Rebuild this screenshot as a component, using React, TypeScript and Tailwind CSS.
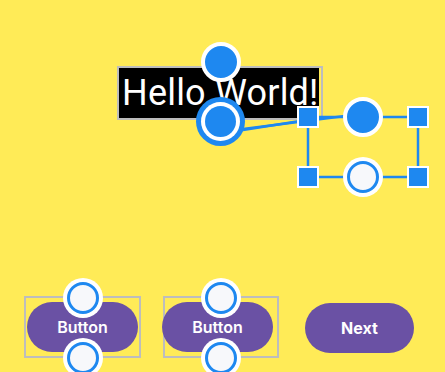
// filled blue handle with white ring
const FilledHandle = ({ className }: { className: string }) => (
  <div className={`absolute w-[40px] h-[40px] rounded-full border-[4px] border-white bg-[#1e88f0] ${className}`} />
);

// hollow handle: white ring, blue ring, white fill
const HollowHandle = ({ className }: { className: string }) => (
  <div className={`absolute w-[40px] h-[40px] rounded-full bg-white p-[4px] ${className}`}>
    <div className="w-full h-full rounded-full border-[3px] border-[#1e88f0] bg-[#f7f8fb]" />
  </div>
);

const SquareHandle = ({ className }: { className: string }) => (
  <div className={`absolute w-[22px] h-[22px] border-2 border-white bg-[#1e88f0] ${className}`} />
);

const Pill = ({ label, bold, className = "" }: { label: string; bold?: boolean; className?: string }) => (
  <div
    className={`shrink-0 h-[50px] rounded-full bg-[#6a51a4] flex items-center justify-center text-white text-[16px] font-['Inter',sans-serif] ${bold ? "font-bold" : "font-semibold"} ${className}`}
  >
    {label}
  </div>
);

// selected button: gray outline with top/bottom anchors
const SelectedButton = ({ width, pillClass }: { width: string; pillClass: string }) => (
  <div className={`relative h-[62px] border-2 border-[#bdbdbd] flex items-center ${width}`}>
    <Pill label="Button" className={pillClass} />
    <HollowHandle className="left-1/2 -translate-x-1/2 -top-[20px]" />
    <HollowHandle className="left-1/2 -translate-x-1/2 top-[40px]" />
  </div>
);

export default function App() {
  return (
    <div className="w-[445px] h-[372px] overflow-hidden bg-[#ffeb57] font-['Roboto',sans-serif] flex flex-col">
      {/* layout canvas: text view and chain */}
      <div className="relative h-[296px] shrink-0">
        <div className="absolute left-[117px] top-[66px] w-[206px] h-[54px] border-2 border-[#bdbdbd]">
          <div className="w-[200px] h-full bg-black text-white text-[36px] leading-[50px] pl-[3px] whitespace-nowrap tracking-[0.2px]">
            Hello World!
          </div>
        </div>

        {/* constraint lines */}
        <svg className="absolute left-0 top-0" width={445} height={296}>
          <g stroke="#1e88f0" strokeWidth={2.5} fill="none">
            <line x1={243} y1={129} x2={345} y2={116} />
            <line x1={243} y1={130} x2={300} y2={121} />
            <rect x={308} y={117} width={110} height={60} />
          </g>
        </svg>

        <FilledHandle className="left-[201px] top-[42px]" />
        <div className="absolute left-[196px] top-[97px] w-[49px] h-[49px] rounded-full bg-[#1e88f0] p-[5px]">
          <div className="w-full h-full rounded-full bg-white p-[4px]">
            <div className="w-full h-full rounded-full bg-[#1e88f0]" />
          </div>
        </div>

        <SquareHandle className="left-[297px] top-[106px]" />
        <SquareHandle className="left-[407px] top-[106px]" />
        <SquareHandle className="left-[297px] top-[166px]" />
        <SquareHandle className="left-[407px] top-[166px]" />
        <FilledHandle className="left-[343px] top-[97px]" />
        <HollowHandle className="left-[343px] top-[157px]" />
      </div>

      {/* button row */}
      <div className="flex items-start pl-[24px]">
        <SelectedButton width="w-[117px]" pillClass="w-[111px] ml-[1px]" />
        <SelectedButton width="w-[116px] ml-[22px]" pillClass="w-[111px] -ml-[3px]" />
        <Pill label="Next" bold className="w-[109px] ml-[26px] mt-[7px]" />
      </div>
    </div>
  );
}
